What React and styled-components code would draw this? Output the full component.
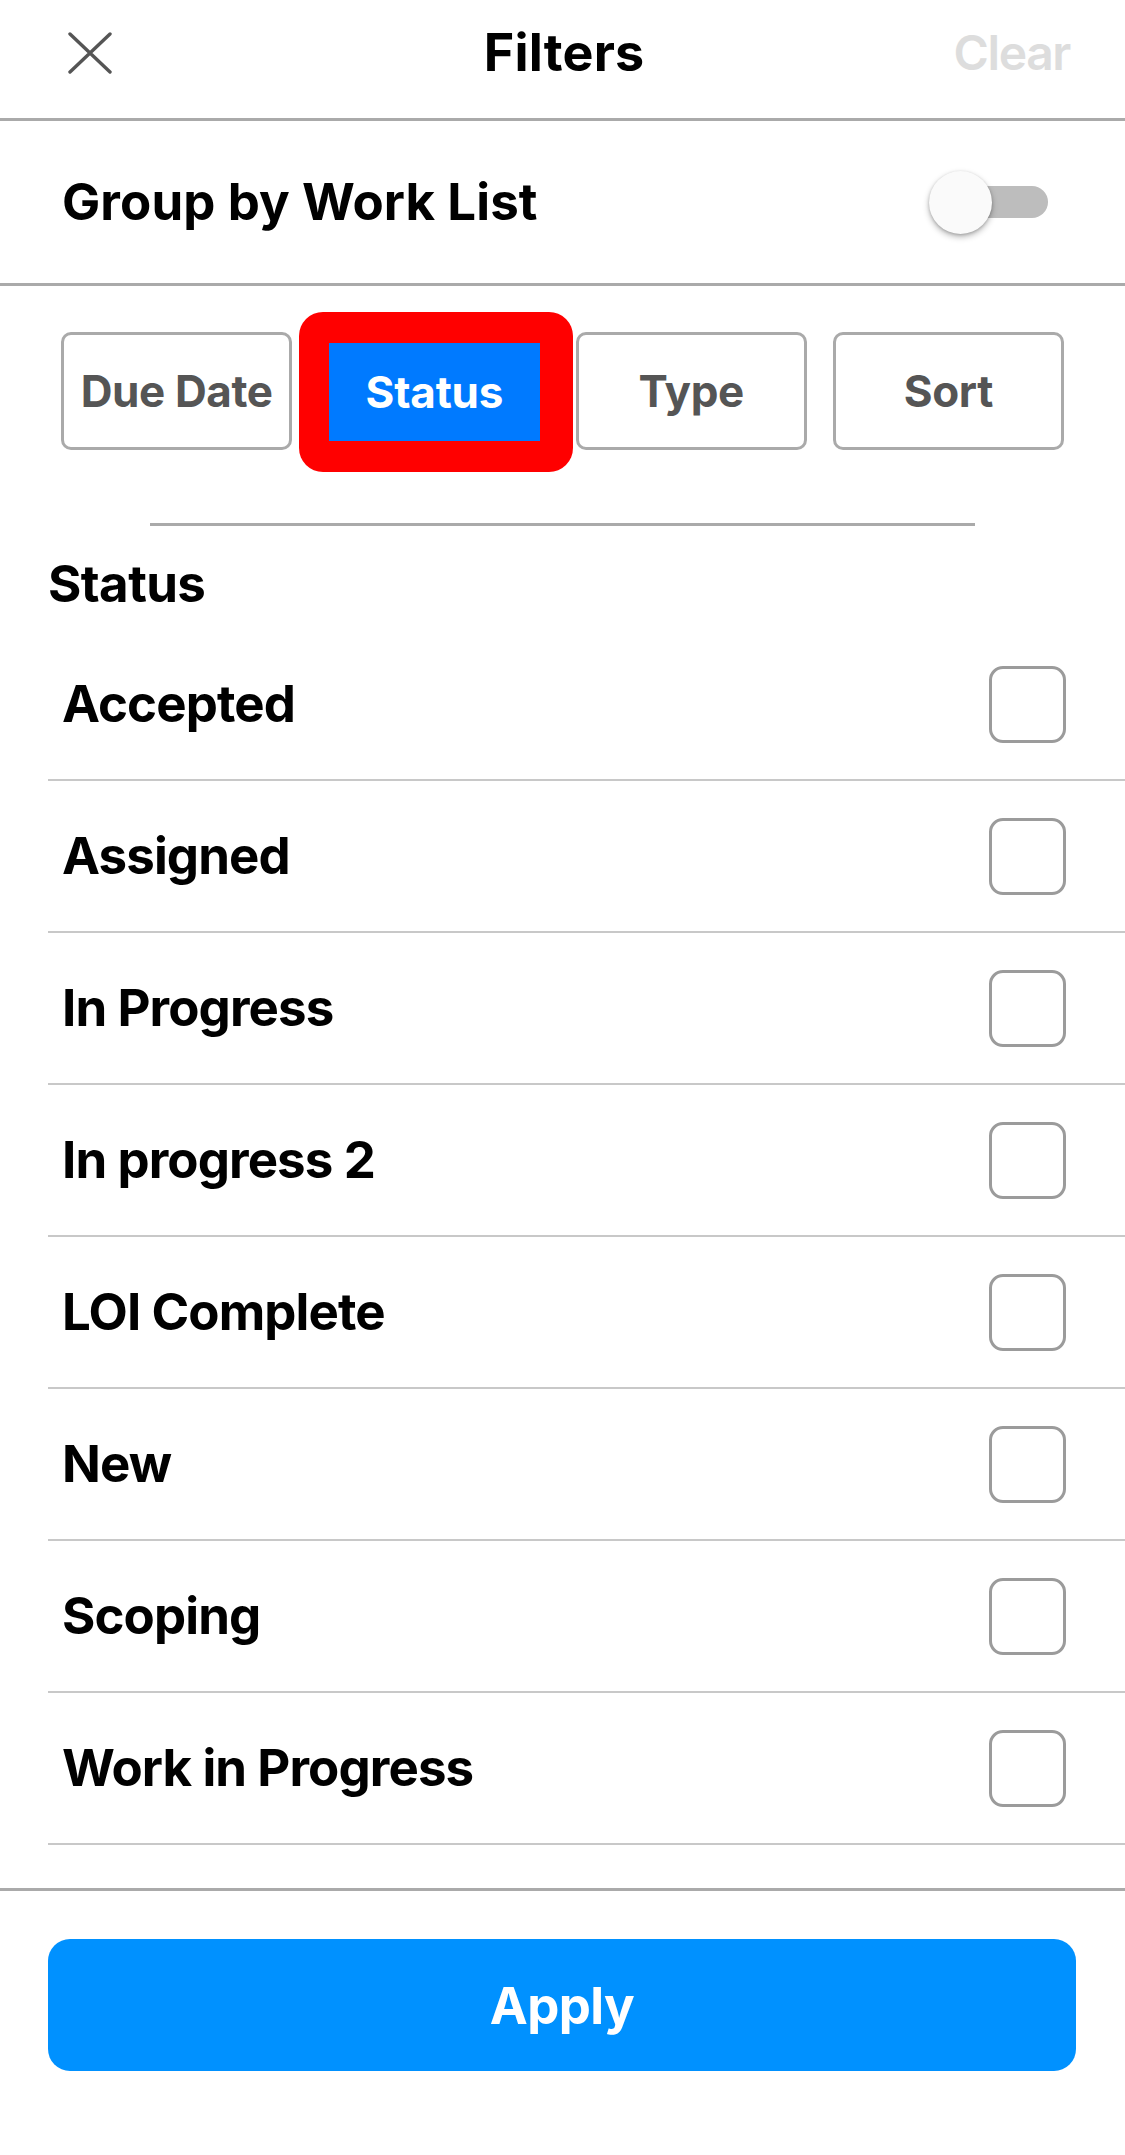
import React from "react";
import styled, { createGlobalStyle } from "styled-components";

const GlobalStyle = createGlobalStyle`
  html, body {
    margin: 0;
    padding: 0;
    background: #ffffff;
  }
  body {
    font-family: Inter, "Noto Sans", "Liberation Sans", sans-serif;
    -webkit-font-smoothing: antialiased;
  }
  * { box-sizing: border-box; }
`;

const Page = styled.div`
  width: 1125px;
  min-height: 2155px;
  background: #fff;
  display: flex;
  flex-direction: column;
`;

const Header = styled.header`
  height: 121px;
  border-bottom: 3px solid #aaaaaa;
  display: grid;
  grid-template-columns: 1fr auto 1fr;
  align-items: center;
  padding: 0 55px 12px 66px;
`;

const CloseButton = styled.button`
  justify-self: start;
  width: 48px;
  height: 48px;
  padding: 0;
  border: none;
  background: transparent;
  display: flex;
  align-items: center;
  justify-content: center;
`;

const Title = styled.h1`
  margin: 0;
  font-size: 52px;
  line-height: 62px;
  font-weight: 700;
  color: #000;
  letter-spacing: 0.2px;
  transform: translateX(-4px);
`;

const ClearButton = styled.span`
  justify-self: end;
  font-size: 48px;
  line-height: 62px;
  font-weight: 600;
  color: #dddddd;
  letter-spacing: -1.4px;
`;

const GroupRow = styled.div`
  height: 165px;
  border-bottom: 3px solid #aaaaaa;
  display: flex;
  align-items: center;
  justify-content: space-between;
  padding: 0 77px 0 62px;
`;

const GroupLabel = styled.span`
  font-size: 51px;
  line-height: 62px;
  font-weight: 700;
  color: #000;
  letter-spacing: 0.1px;
`;

const SwitchTrack = styled.div`
  position: relative;
  width: 98px;
  height: 32px;
  border-radius: 16px;
  background: #bdbdbd;
  margin-left: 21px;
`;

const SwitchKnob = styled.div`
  position: absolute;
  left: -21px;
  top: -15.5px;
  width: 63px;
  height: 63px;
  border-radius: 50%;
  background: #fafafa;
  box-shadow: 0 3px 6px rgba(0, 0, 0, 0.28), 0 1px 3px rgba(0, 0, 0, 0.18);
`;

const TabBar = styled.div`
  display: flex;
  gap: 26px;
  padding: 0 61px;
  margin-top: 46px;
`;

const TabCell = styled.div`
  position: relative;
  flex: 1 1 0;
  height: 118px;
  display: flex;
`;

const TabButton = styled.button`
  flex: 1;
  border: 3px solid #aaaaaa;
  border-radius: 10px;
  background: #fff;
  color: #555555;
  font-family: inherit;
  font-size: 44px;
  font-weight: 700;
  letter-spacing: -0.4px;
  padding: 0;
`;

const Highlight = styled.div`
  position: absolute;
  top: -20px;
  bottom: -22px;
  left: -19px;
  right: -23px;
  background: #ff0000;
  border-radius: 24px;
`;

const ActiveTabButton = styled.button`
  position: relative;
  flex: 1;
  margin: 11px 10px 9px 11px;
  border: none;
  border-radius: 0;
  background: #007aff;
  color: #ffffff;
  font-family: inherit;
  font-size: 44px;
  font-weight: 700;
  letter-spacing: -0.2px;
  padding: 0;
`;

const Separator = styled.hr`
  margin: 73px 150px 0;
  height: 3px;
  border: none;
  background: #aaaaaa;
`;

const SectionTitle = styled.h2`
  margin: 27px 0 0 48px;
  font-size: 51px;
  line-height: 62px;
  font-weight: 700;
  color: #000;
  letter-spacing: -0.6px;
`;

const List = styled.ul`
  list-style: none;
  margin: 14px 0 0 48px;
  padding: 0;
`;

const Row = styled.li`
  height: 152px;
  border-bottom: 2px solid #c8c8c8;
  display: flex;
  align-items: center;
  justify-content: space-between;
  padding: 0 59px 0 14px;
`;

const RowLabel = styled.span`
  font-size: 51px;
  line-height: 62px;
  font-weight: 700;
  color: #000;
  letter-spacing: -0.9px;
`;

const Checkbox = styled.span`
  width: 77px;
  height: 77px;
  border: 3px solid #9b9b9b;
  border-radius: 14px;
  background: #fff;
`;

const Footer = styled.footer`
  margin-top: 43px;
  border-top: 3px solid #aaaaaa;
  padding: 48px 49px 0 48px;
`;

const ApplyButton = styled.button`
  width: 100%;
  height: 132px;
  border: none;
  border-radius: 22px;
  background: #0091ff;
  color: #ffffff;
  font-family: inherit;
  font-size: 51px;
  font-weight: 700;
  letter-spacing: -0.6px;
`;

const CloseIcon = () => (
  <svg width="44" height="42" viewBox="0 0 44 42" fill="none">
    <path
      d="M2 2 L42 40 M42 2 L2 40"
      stroke="#555555"
      strokeWidth="3.4"
      strokeLinecap="round"
    />
  </svg>
);

const tabs = ["Due Date", "Status", "Type", "Sort"];
const statuses = [
  "Accepted",
  "Assigned",
  "In Progress",
  "In progress 2",
  "LOI Complete",
  "New",
  "Scoping",
  "Work in Progress",
];

export default function App() {
  return (
    <>
      <GlobalStyle />
      <Page>
        <Header>
          <CloseButton aria-label="Close">
            <CloseIcon />
          </CloseButton>
          <Title>Filters</Title>
          <ClearButton>Clear</ClearButton>
        </Header>

        <GroupRow>
          <GroupLabel>Group by Work List</GroupLabel>
          <SwitchTrack>
            <SwitchKnob />
          </SwitchTrack>
        </GroupRow>

        <TabBar>
          {tabs.map((t) =>
            t === "Status" ? (
              <TabCell key={t}>
                <Highlight />
                <ActiveTabButton>{t}</ActiveTabButton>
              </TabCell>
            ) : (
              <TabCell key={t}>
                <TabButton>{t}</TabButton>
              </TabCell>
            )
          )}
        </TabBar>

        <Separator />
        <SectionTitle>Status</SectionTitle>
        <List>
          {statuses.map((s) => (
            <Row key={s}>
              <RowLabel>{s}</RowLabel>
              <Checkbox />
            </Row>
          ))}
        </List>

        <Footer>
          <ApplyButton>Apply</ApplyButton>
        </Footer>
      </Page>
    </>
  );
}
